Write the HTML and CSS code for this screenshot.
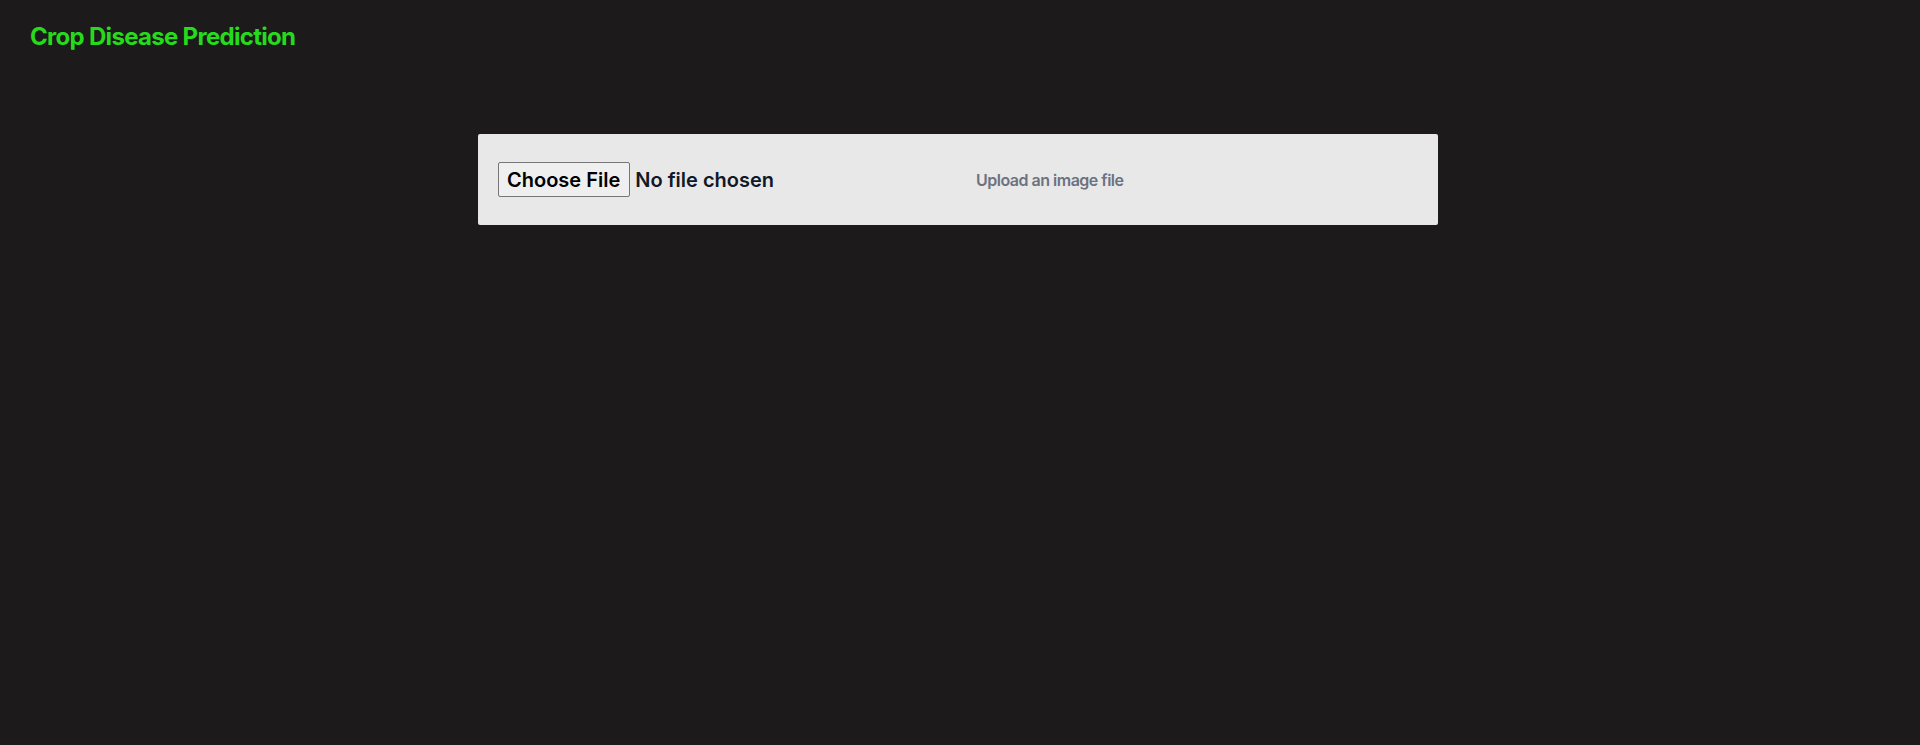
FILE: index.html
```html
<!DOCTYPE html>
<html lang="en">
<head>
<meta charset="utf-8">
<title>Crop Disease Prediction</title>
<link rel="stylesheet" href="styles.css">
</head>
<body>
  <header class="header">
    <h1 class="title">Crop Disease Prediction</h1>
  </header>
  <main class="main">
    <form class="card">
      <label class="chooser">
        <span class="choose-btn">Choose File</span>
        <span class="chosen">No file chosen</span>
      </label>
      <p class="hint">Upload an image file</p>
    </form>
  </main>
</body>
</html>
```

FILE: styles.css
```css
* { box-sizing: border-box; }

html, body {
  margin: 0;
  padding: 0;
}

body {
  background: #1c1a1b;
  font-family: Inter, "Liberation Sans", sans-serif;
  min-height: 745px;
}

.header {
  padding: 21px 30px 0;
}

.title {
  margin: 0;
  font-size: 24px;
  line-height: 32px;
  font-weight: 700;
  letter-spacing: -0.7px;
  color: #26db1c;
}

.main {
  display: flex;
  justify-content: center;
  padding-top: 81px;
  padding-right: 4px;
}

.card {
  width: 960px;
  margin: 0;
  background: #e8e8e8;
  border-radius: 2px;
  padding: 28px 20px 28px;
  display: grid;
  grid-template-columns: 478px auto;
  align-items: center;
}

.chooser {
  display: flex;
  align-items: center;
  gap: 5px;
  cursor: pointer;
}

.choose-btn {
  display: inline-flex;
  align-items: center;
  height: 35px;
  padding: 0 9px 0 8px;
  background: #efefef;
  border: 1px solid #767676;
  border-radius: 2px;
  font-size: 20px;
  font-weight: 600;
  color: #000;
  line-height: 28px;
}

.chosen {
  font-size: 20px;
  font-weight: 600;
  line-height: 28px;
  color: #111827;
}

.hint {
  margin: 0;
  font-size: 16px;
  line-height: 24px;
  font-weight: 600;
  letter-spacing: -0.5px;
  color: #6b7280;
}
```
